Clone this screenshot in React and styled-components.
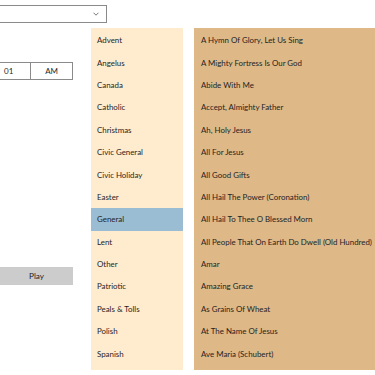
import React, { useState } from "react";
import styled, { createGlobalStyle } from "styled-components";

const GlobalStyle = createGlobalStyle`
  html, body {
    margin: 0;
    padding: 0;
    background: #ffffff;
    overflow: hidden;
  }
  body {
    font-family: Lato, "Noto Sans", sans-serif;
    color: #1f1f1f;
  }
`;

const Page = styled.div`
  width: 375px;
  height: 375px;
  display: flex;
  flex-direction: column;
  overflow: hidden;
`;

const Header = styled.div`
  height: 28px;
  padding-top: 5px;
  box-sizing: border-box;
`;

const Dropdown = styled.div`
  width: 110px;
  height: 18px;
  margin-left: -3px;
  box-sizing: border-box;
  border: 1px solid #8a8a8a;
  background: #fff;
  display: flex;
  align-items: center;
  justify-content: flex-end;
  padding-right: 7px;
`;

const Body = styled.div`
  flex: 1;
  display: flex;
  min-height: 0;
`;

const LeftColumn = styled.div`
  width: 91px;
  flex-shrink: 0;
  display: flex;
  flex-direction: column;
`;

const TimeBox = styled.div`
  margin-top: 34px;
  margin-left: -1px;
  width: 74px;
  height: 18px;
  box-sizing: border-box;
  border: 1px solid #8a8a8a;
  display: flex;
  font-size: 8px;
`;

const TimeCell = styled.div`
  width: ${(p) => p.$w};
  display: flex;
  align-items: center;
  justify-content: ${(p) => (p.$center ? "center" : "flex-start")};
  padding-left: ${(p) => (p.$center ? "0" : "4px")};
  border-left: ${(p) => (p.$divider ? "1px solid #8a8a8a" : "none")};
  box-sizing: border-box;
`;

const PlayButton = styled.button`
  margin-top: 187px;
  width: 73px;
  height: 18px;
  border: none;
  background: #cccccc;
  font-family: inherit;
  font-size: 8.2px;
  color: #1f1f1f;
  padding: 0;
`;

const List = styled.div`
  background: ${(p) => p.$bg};
  width: ${(p) => p.$w || "auto"};
  flex: ${(p) => (p.$w ? "0 0 auto" : "1")};
  margin-left: ${(p) => p.$ml || "0"};
  padding: 1px 0 5px;
  height: 342px;
  box-sizing: border-box;
  overflow: hidden;
`;

const Item = styled.div`
  height: 22.4px;
  display: flex;
  align-items: center;
  padding-left: ${(p) => p.$pl};
  font-size: 7.9px;
  white-space: nowrap;
  background: ${(p) => (p.$selected ? "#9bbdd3" : "transparent")};
`;

const categories = [
  "Advent",
  "Angelus",
  "Canada",
  "Catholic",
  "Christmas",
  "Civic General",
  "Civic Holiday",
  "Easter",
  "General",
  "Lent",
  "Other",
  "Patriotic",
  "Peals & Tolls",
  "Polish",
  "Spanish",
];

const songs = [
  "A Hymn Of Glory, Let Us Sing",
  "A Mighty Fortress Is Our God",
  "Abide With Me",
  "Accept, Almighty Father",
  "Ah, Holy Jesus",
  "All For Jesus",
  "All Good Gifts",
  "All Hail The Power (Coronation)",
  "All Hail To Thee O Blessed Morn",
  "All People That On Earth Do Dwell (Old Hundred)",
  "Amar",
  "Amazing Grace",
  "As Grains Of Wheat",
  "At The Name Of Jesus",
  "Ave Maria (Schubert)",
];

function Chevron() {
  return (
    <svg width="6" height="4" viewBox="0 0 6 4">
      <path d="M0.5 0.7 L3 3.2 L5.5 0.7" fill="none" stroke="#555" strokeWidth="0.8" />
    </svg>
  );
}

export default function App() {
  const [selected, setSelected] = useState("General");
  return (
    <Page>
      <GlobalStyle />
      <Header>
        <Dropdown>
          <Chevron />
        </Dropdown>
      </Header>
      <Body>
        <LeftColumn>
          <TimeBox>
            <TimeCell $w="31px">01</TimeCell>
            <TimeCell $w="43px" $center $divider>
              AM
            </TimeCell>
          </TimeBox>
          <PlayButton>Play</PlayButton>
        </LeftColumn>
        <List $bg="#ffebcd" $w="92px">
          {categories.map((c) => (
            <Item
              key={c}
              $pl="6px"
              $selected={c === selected}
              onClick={() => setSelected(c)}
            >
              {c}
            </Item>
          ))}
        </List>
        <List $bg="#deb887" $ml="11px">
          {songs.map((s) => (
            <Item key={s} $pl="7px">
              {s}
            </Item>
          ))}
        </List>
      </Body>
    </Page>
  );
}
